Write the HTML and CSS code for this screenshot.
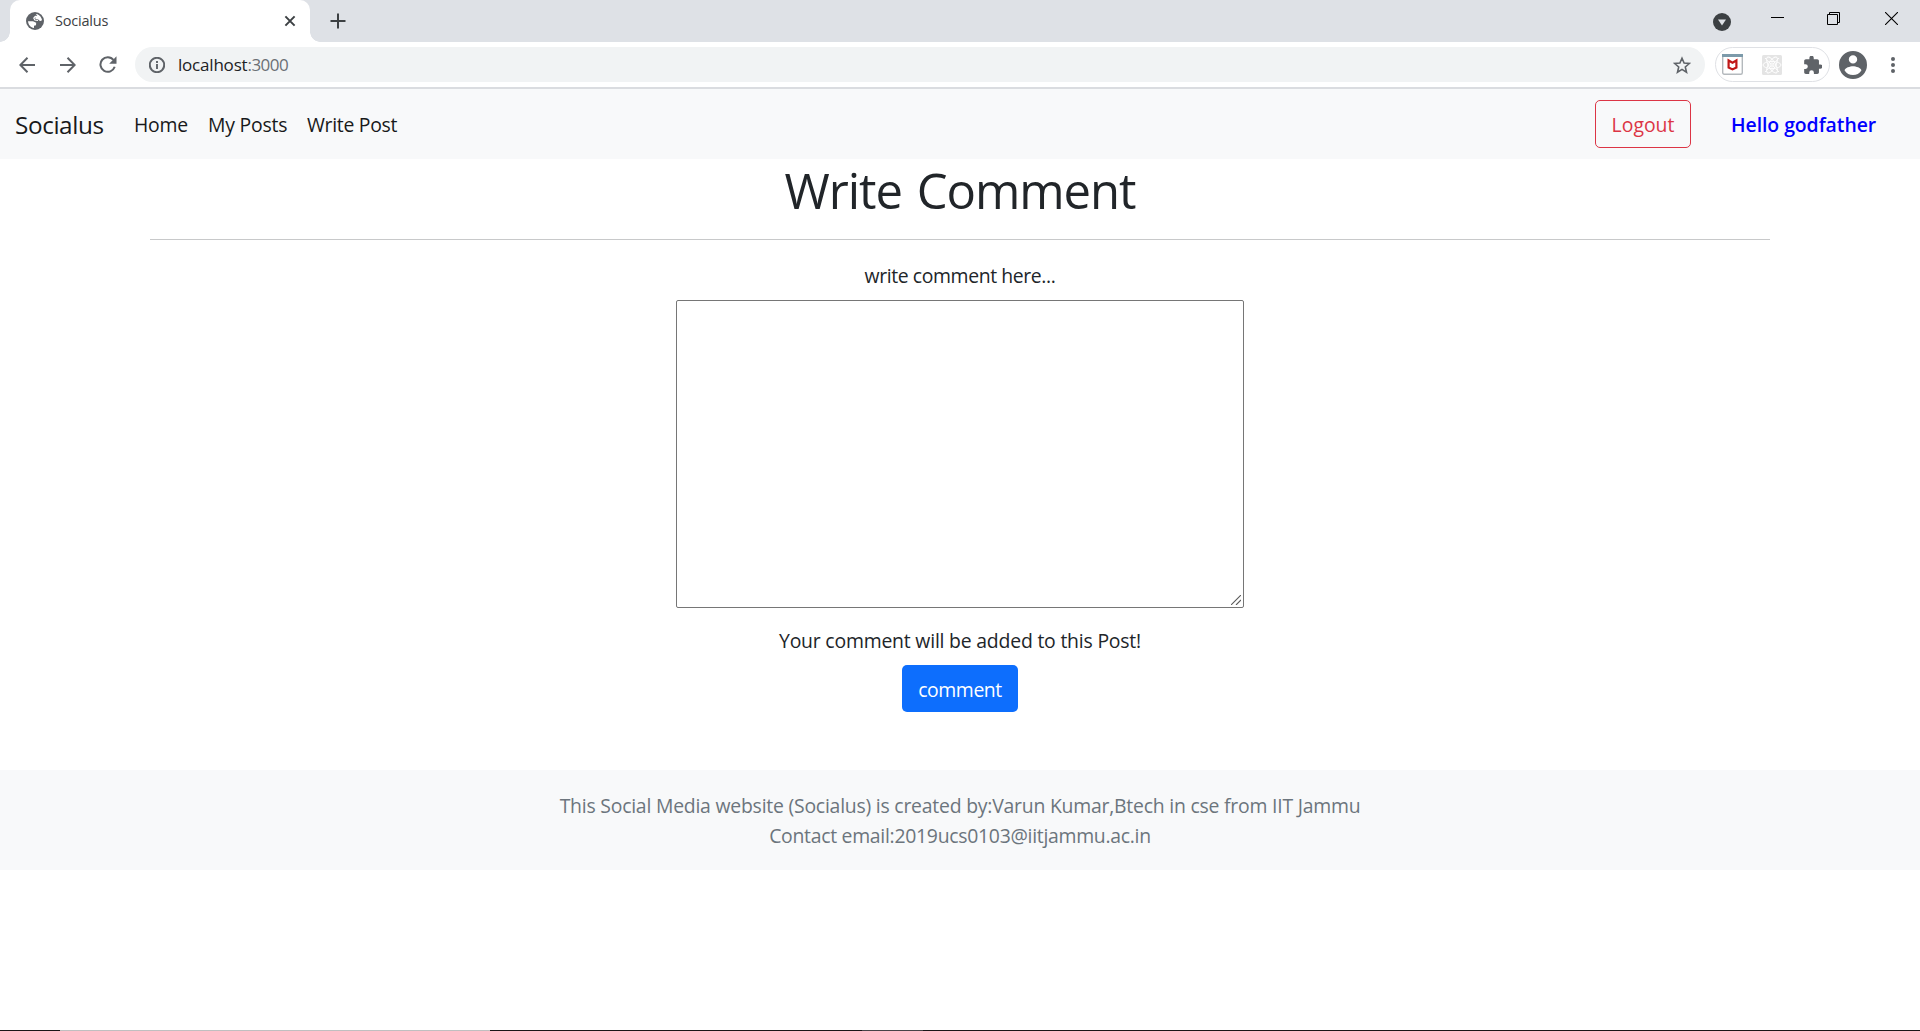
FILE: index.html
```html
<!DOCTYPE html>
<html lang="en">
<head>
<meta charset="utf-8">
<title>Socialus</title>
<link rel="stylesheet" href="styles.css">
</head>
<body>
<div class="tabstrip">
  <div class="tab">
    <svg class="favicon" width="18" height="18" viewBox="0 0 18 18"><circle cx="9" cy="9" r="9" fill="#5f6368"/><path d="M10 2C12 1.800 15.500 4.500 16 8c-.6 1-2 1.200-2.800.5L12 7.200 9.500 7l-.3-1.800 2.300-.8Z" fill="#fff"/><path d="M12.500 4.500 9.300 4.300 7.800 6l1 2 3.200.3" fill="none" stroke="#fff" stroke-width="1.200"/><path d="M2 9.300h5l3.200 1.500-.2 2.400-2 .6v2.200C4.800 15.600 2.300 13 2 9.300Z" fill="#fff"/></svg>
    <span class="tab-title">Socialus</span>
    <svg class="tab-close" width="12" height="12" viewBox="0 0 12 12"><path d="m1.400 1.400 9.200 9.200m0-9.200-9.200 9.200" stroke="#3c4043" stroke-width="2"/></svg>
  </div>
  <svg class="new-tab" width="16" height="16" viewBox="0 0 16 16"><path d="M8 .5v15M.5 8h15" stroke="#3c4043" stroke-width="2"/></svg>
  <div class="window-controls">
    <svg width="18" height="18" viewBox="0 0 18 18"><circle cx="9" cy="9" r="9" fill="#3c4043"/><path d="M5 6.500h8L9 12.500Z" fill="#dee1e6"/></svg>
    <svg width="13" height="13" viewBox="0 0 13 13"><path d="M0 5.500h13" stroke="#000"/></svg>
    <svg width="13" height="13" viewBox="0 0 13 13"><path d="M.5 2.500h10v10H.5ZM2.500 2.500v-2h10v10h-2" fill="none" stroke="#000"/></svg>
    <svg width="13" height="13" viewBox="0 0 13 13"><path d="m0 0 13 13m0-13L0 13" stroke="#000" stroke-width="1.100"/></svg>
  </div>
</div>
<div class="toolbar">
  <svg class="tool" width="16" height="16" viewBox="0 0 16 16"><path d="M16 8H1.500M8.500.8 1.300 8l7.200 7.200" class="line"/></svg>
  <svg class="tool" width="16" height="16" viewBox="0 0 16 16"><path d="M0 8h14.500M7.500.8 14.700 8l-7.200 7.200" class="line"/></svg>
  <svg class="tool reload" width="18" height="17" viewBox="0 0 18 17"><path d="M14.500 4A7.300 7.300 0 1 0 15.700 10.800" class="line"/><path d="M17.500.3v7.400h-7.300Z" fill="#5f6368"/></svg>
  <div class="omnibox">
    <svg width="16" height="16" viewBox="0 0 16 16"><circle cx="8" cy="8" r="7.200" class="line"/><path d="M8 7v5M8 4v2" stroke="#5f6368" stroke-width="1.900"/></svg>
    <span class="url">localhost<span class="port">:3000</span></span>
    <svg class="star" width="18" height="18" viewBox="0 0 18 18"><path d="m9 2.200 2.100 4.900 5.200.4-4 3.500 1.200 5.200L9 13.400l-4.500 2.800L5.700 11l-4-3.500 5.200-.4Z" fill="none" stroke="#5f6368" stroke-width="1.600"/></svg>
  </div>
  <div class="extensions">
    <svg width="21" height="21" viewBox="0 0 21 21"><rect x=".7" y=".7" width="19.600" height="19.600" rx="1.500" fill="#fff" stroke="#b4b9bd" stroke-width="1.400"/><path d="M0 0h21v3H0Z" fill="#7c9aaa"/><path d="M6.600 6.500v7l3.900 1.900 3.900-1.900v-7l-3.900 2.300Z" fill="none" stroke="#c01818" stroke-width="2.200"/></svg>
    <svg class="devtools" width="20" height="20" viewBox="0 0 20 20"><rect width="20" height="20" rx="1.500" fill="#e4e4e4"/><g fill="none" stroke="#fff" stroke-width=".9"><ellipse cx="10" cy="10" rx="9" ry="3.500"/><ellipse cx="10" cy="10" rx="9" ry="3.500" transform="rotate(60 10 10)"/><ellipse cx="10" cy="10" rx="9" ry="3.500" transform="rotate(120 10 10)"/><path d="m3 3 14 14m0-14L3 17" stroke-dasharray="2 1"/><circle cx="10" cy="10" r="2"/></g></svg>
    <svg width="18" height="18" viewBox="1.800 1.300 20.700 20.700"><path d="M20.500 11H19V7c0-1.100-.9-2-2-2h-4V3.500a2.500 2.500 0 0 0-5 0V5H4c-1.100 0-2 .9-2 2v3.800h1.500a2.700 2.700 0 0 1 0 5.400H2V20c0 1.100.9 2 2 2h3.800v-1.500a2.700 2.700 0 0 1 5.400 0V22H17c1.100 0 2-.9 2-2v-4h1.500a2.500 2.500 0 0 0 0-5Z" fill="#5f6368"/></svg>
  </div>
  <svg class="avatar" width="28" height="28" viewBox="2 2 20 20"><path fill="#5f6368" d="M12 2a10 10 0 1 0 0 20 10 10 0 0 0 0-20Zm0 3a3 3 0 1 1 0 6 3 3 0 0 1 0-6Zm0 14.200a7.200 7.200 0 0 1-6-3.220c.03-1.990 4-3.080 6-3.080s5.970 1.090 6 3.080a7.200 7.200 0 0 1-6 3.220Z"/></svg>
  <svg class="more" width="4" height="16" viewBox="0 0 4 16"><g fill="#5f6368"><circle cx="2" cy="2" r="2"/><circle cx="2" cy="8" r="2"/><circle cx="2" cy="14" r="2"/></g></svg>
</div>
<nav class="navbar">
  <a class="brand">Socialus</a>
  <a class="link home">Home</a>
  <a class="link posts">My Posts</a>
  <a class="link write">Write Post</a>
  <a class="logout">Logout</a>
  <b class="hello">Hello godfather</b>
</nav>
<main class="page">
  <h1>Write Comment</h1>
  <hr>
  <label class="prompt" for="comment">write comment here...</label>
  <div class="field">
    <textarea id="comment"></textarea>
    <svg class="grip" width="10" height="10" viewBox="0 0 10 10"><path d="M0 10 10 0M5 10l5-5" stroke="#5a5a5a" stroke-width="1.100"/></svg>
  </div>
  <p class="note">Your comment will be added to this Post!</p>
  <button class="submit">comment</button>
</main>
<footer class="footer">
  <div class="credit">This Social Media website (Socialus) is created by:Varun Kumar,Btech in cse from IIT Jammu</div>
  <div class="contact">Contact email:2019ucs0103@iitjammu.ac.in</div>
</footer>
<div class="taskbar"><i class="edge"></i><i class="search"></i><i class="apps"></i><i class="active"></i><i class="rest"></i></div>
</body>
</html>
```
FILE: styles.css
```css
* { box-sizing: border-box; }
body {
  margin: 0;
  height: 1031px;
  overflow: hidden;
  display: flex;
  flex-direction: column;
  background: #fff;
  color: #212529;
  font: 19.4px/30px "Open Sans", "Noto Sans", sans-serif;
}
svg { display: block; flex: none; }
.line { fill: none; stroke: #5f6368; stroke-width: 2; }

.tabstrip {
  display: flex;
  height: 42px;
  flex: none;
  background: #dee1e6;
  padding-left: 10px;
}
.tab {
  position: relative;
  display: flex;
  align-items: center;
  width: 300px;
  padding: 0 14px 0 16px;
  background: #fff;
  border-radius: 10px 10px 0 0;
}
.tab::before, .tab::after {
  content: "";
  position: absolute;
  bottom: 0;
  width: 10px;
  height: 10px;
}
.tab::before { left: -10px; background: radial-gradient(circle at 0 0, #dee1e6 9.500px, #fff 10px); }
.tab::after { right: -10px; background: radial-gradient(circle at 100% 0, #dee1e6 9.500px, #fff 10px); }
.tab-title { margin-left: 11px; font-size: 14.500px; letter-spacing: -.2px; color: #3c4043; }
.tab-close { margin-left: auto; }
.new-tab { margin: 13px 0 0 20px; }
.window-controls { display: flex; margin-left: auto; padding: 12px 22px 0 0; }
.window-controls svg + svg { margin-left: 43px; }
.window-controls svg:nth-child(2) { margin-left: 40px; }
.window-controls svg:first-child { margin-top: 1px; }
.window-controls svg:last-child { margin-left: 45px; }

.toolbar {
  display: flex;
  align-items: center;
  height: 47px;
  flex: none;
  padding: 0 25px 0 19px;
  border-bottom: 2px solid #dadce0;
}
.tool + .tool { margin-left: 25px; }
.tool + .reload { margin-left: 23px; }
.omnibox {
  display: flex;
  align-items: center;
  width: 1570px;
  height: 35px;
  margin-left: 18px;
  padding: 0 14px;
  border-radius: 18px;
  background: #f1f3f4;
}
.url { margin-left: 13px; font-size: 17px; letter-spacing: -.2px; color: #202124; }
.port { color: #6b6f74; letter-spacing: -.5px; }
.star { margin-left: auto; }
.extensions {
  display: flex;
  align-items: center;
  justify-content: space-between;
  width: 115px;
  height: 35px;
  margin-left: 10px;
  padding: 0 7px 0 6px;
  border: 1px solid #dfe1e5;
  border-radius: 18px;
}
.devtools { margin-right: 3px; }
.avatar { margin-left: 9px; }
.more { margin-left: auto; }

.navbar {
  display: flex;
  align-items: center;
  height: 70px;
  flex: none;
  padding: 0 45px 0 15px;
  background: #f8f9fa;
  color: #18191b;
}
.brand { width: 119px; padding-top: 2px; font-size: 24.300px; letter-spacing: -.4px; }
.link, .hello { padding-top: 1px; }
.home { width: 74px; letter-spacing: -.2px; }
.posts { width: 99px; letter-spacing: -.2px; }
.write { letter-spacing: -.3px; }
.logout {
  width: 96px;
  height: 48px;
  margin-left: auto;
  text-align: center;
  line-height: 47px;
  border: 1px solid #dc3545;
  border-radius: 5px;
  color: #dc3545;
}
.hello { width: 144px; margin-left: 40px; font-weight: 600; white-space: nowrap; color: #00f; letter-spacing: -.05px; }

.page {
  display: flex;
  flex-direction: column;
  align-items: center;
  height: 611px;
  flex: none;
}
h1 { margin: 1px 0 19px; font-size: 49px; line-height: 60px; font-weight: 400; letter-spacing: -1.050px; word-spacing: 3px; }
hr { width: 1620px; height: 1px; margin: 0 0 21px; border: 0; background: #c8c9ca; }
.prompt { letter-spacing: -.39px; margin-bottom: 9px; }
.field { position: relative; margin-bottom: 18px; }
textarea {
  display: block;
  width: 568px;
  height: 308px;
  border: 1px solid #767676;
  border-radius: 2px;
  background: #fff;
  resize: none;
}
.grip { position: absolute; right: 3px; bottom: 3px; }
.note { margin: 0 0 9px; letter-spacing: -.2px; }
.submit {
  width: 116px;
  height: 47px;
  padding: 2px 0 0;
  border: 0;
  border-radius: 5px;
  background: #0d6efd;
  color: #fff;
  font: inherit;
  letter-spacing: -.4px;
}

.footer {
  height: 100px;
  flex: none;
  padding-top: 21px;
  text-align: center;
  background: #f8f9fa;
  color: #6c757d;
}
.credit { letter-spacing: -.22px; }
.contact { letter-spacing: -.28px; }

.taskbar { display: flex; height: 1px; margin-top: auto; }
.edge { width: 60px; background: #1a1518; }
.search { width: 430px; background: #c0bfc0; }
.apps { width: 372px; background: #1a1518; }
.active { width: 61px; background: #484448; }
.rest { flex: 1; background: #1a1518; }
```
